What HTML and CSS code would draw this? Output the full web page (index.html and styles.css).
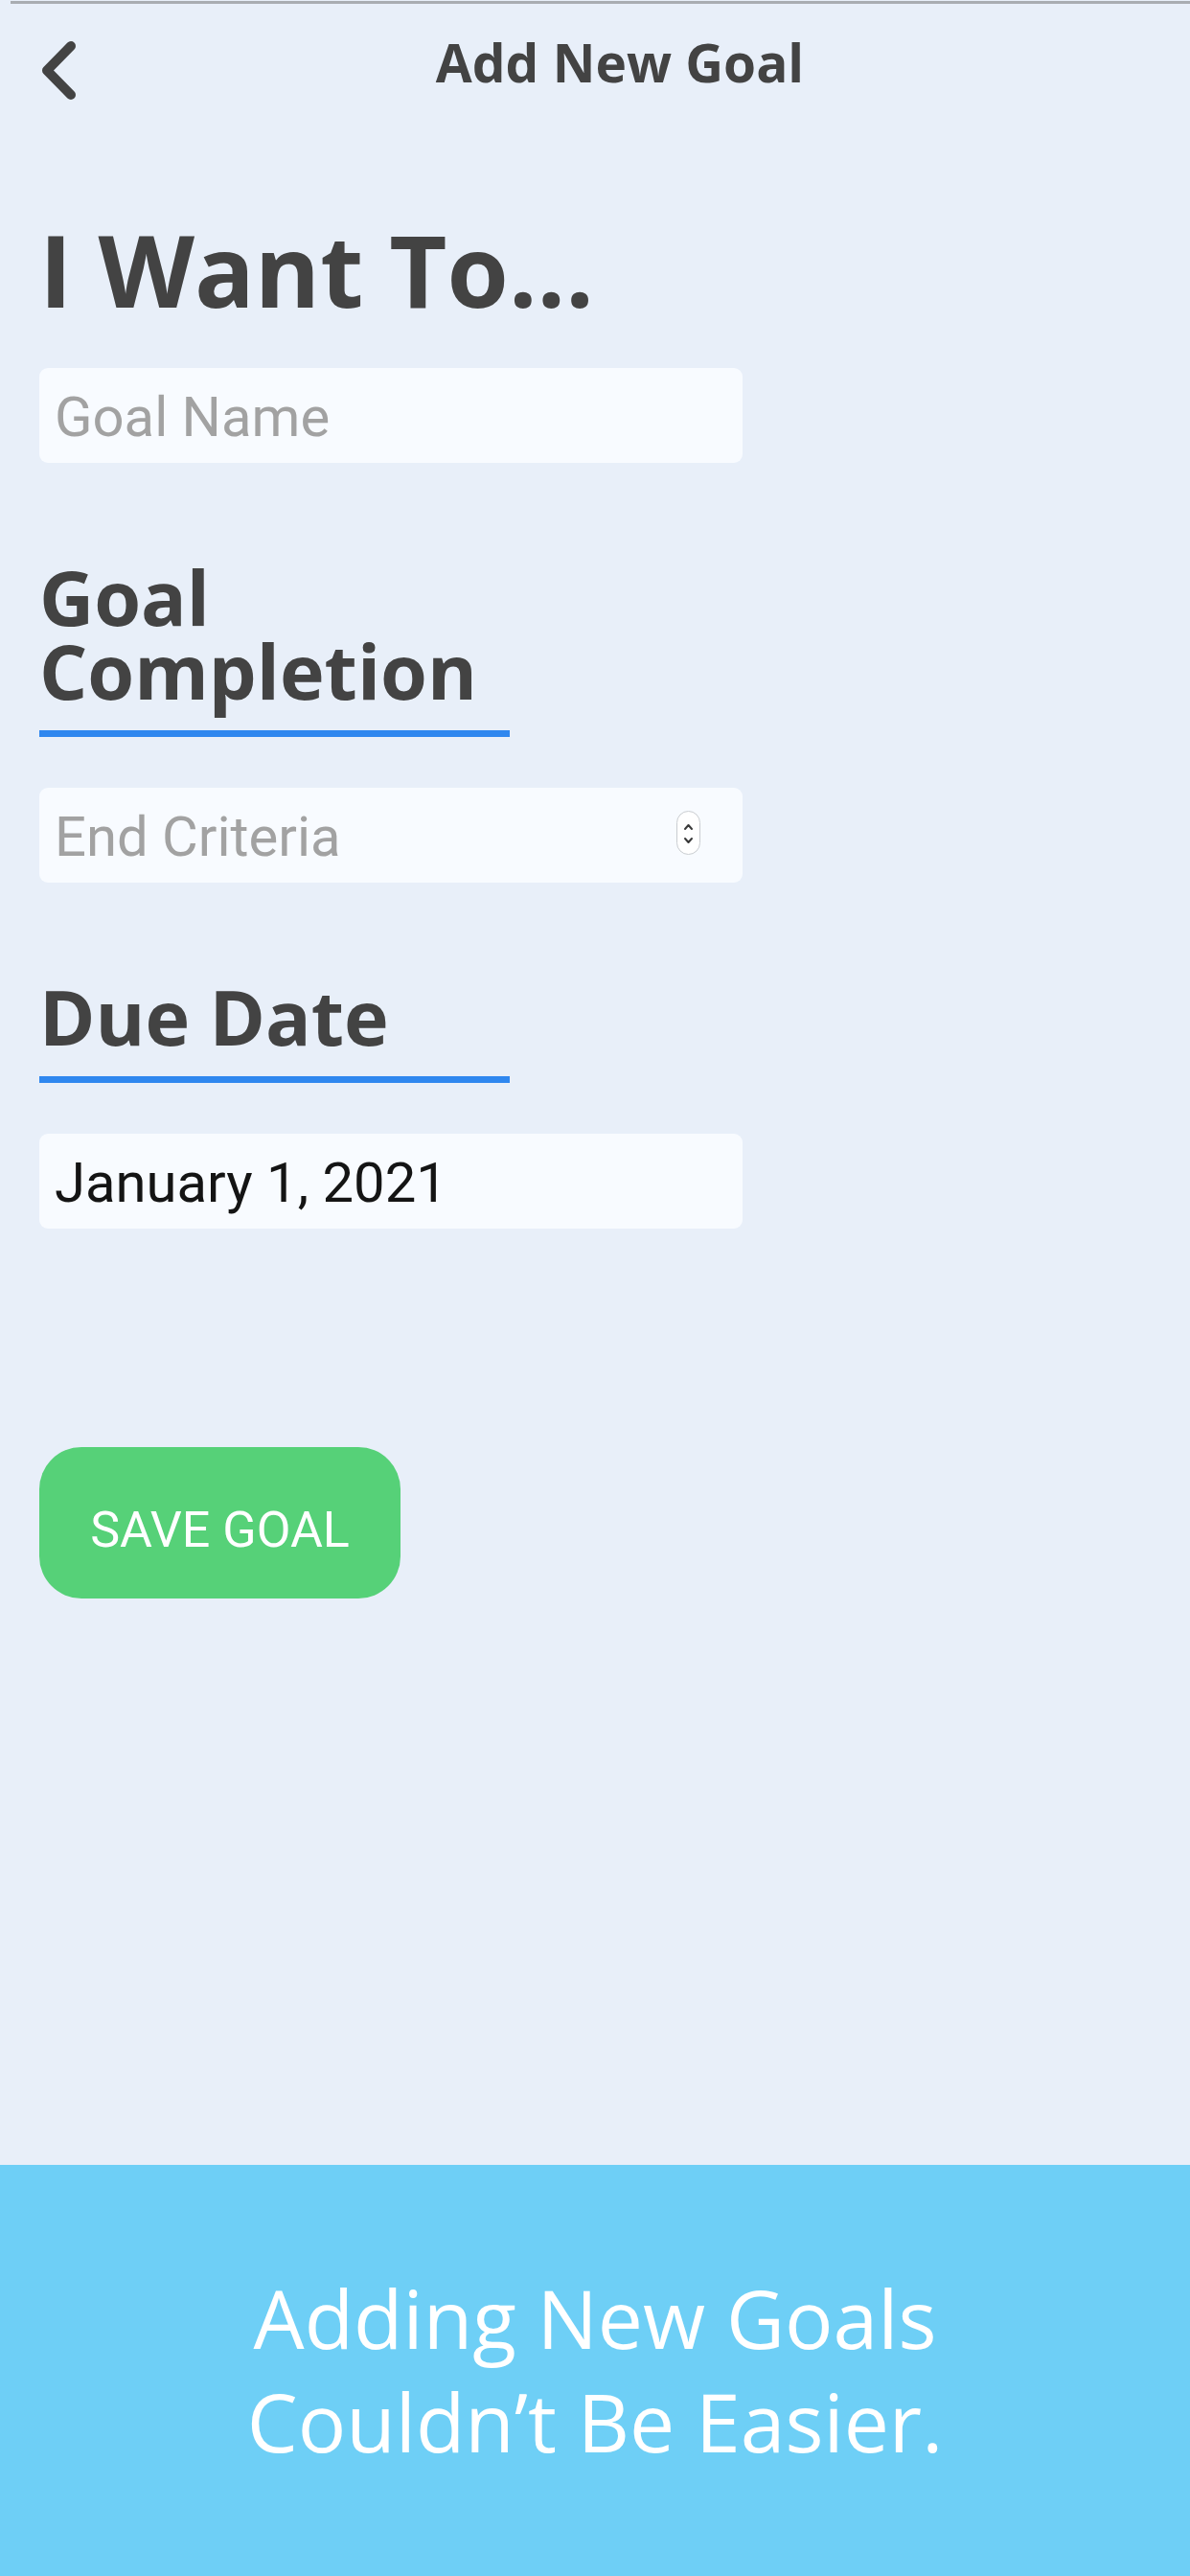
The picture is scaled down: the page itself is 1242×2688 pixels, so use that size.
FILE: index.html
```html
<!DOCTYPE html>
<html lang="en">
<head>
<meta charset="utf-8">
<title>Add New Goal</title>
<link rel="stylesheet" href="styles.css">
</head>
<body>
<div class="page">
  <main class="main">
    <div class="topline"></div>
    <header class="navbar">
      <svg class="back" viewBox="0 0 40 63" width="40" height="63" aria-label="Back">
        <polyline points="34,6 9,31.5 34,57" fill="none" stroke="#434343" stroke-width="10" stroke-linecap="round" stroke-linejoin="round"/>
      </svg>
      <div class="nav-title">Add New Goal</div>
    </header>
    <section class="form">
      <h1 class="want">I Want To...</h1>
      <div class="field placeholder">Goal Name</div>
      <h2 class="section-title">Goal Completion</h2>
      <div class="field placeholder select">
        <span>End Criteria</span>
        <svg class="spinner" viewBox="0 0 25 46" width="25" height="46">
          <rect x="0.5" y="0.5" width="24" height="45" rx="12" fill="#ffffff" stroke="#c9ccd0" stroke-width="1"/>
          <polyline points="9,19 12.5,15 16,19" fill="none" stroke="#3a3a3a" stroke-width="2" stroke-linecap="round" stroke-linejoin="round"/>
          <polyline points="9,29 12.5,33 16,29" fill="none" stroke="#3a3a3a" stroke-width="2" stroke-linecap="round" stroke-linejoin="round"/>
        </svg>
      </div>
      <h2 class="section-title">Due Date</h2>
      <div class="field value">January 1, 2021</div>
      <button class="save" type="button">SAVE GOAL</button>
    </section>
  </main>
  <footer class="banner">
    <p class="banner-text">Adding New Goals<br>Couldn’t Be Easier.</p>
  </footer>
</div>
</body>
</html>
```
FILE: styles.css
```css
* { box-sizing: border-box; }
html, body { margin: 0; padding: 0; }
body {
  background: #e8eff9;
  font-family: "Open Sans", "Liberation Sans", sans-serif;
}
.page {
  min-height: 2688px;
  display: flex;
  flex-direction: column;
}
.main {
  flex: 1;
}
.topline {
  height: 3px;
  margin: 1px 0 0 11px;
  background: #a9adb2;
}
.navbar {
  height: 136px;
  display: flex;
  align-items: flex-start;
  padding-left: 40px;
}
.back {
  display: block;
  margin-top: 38px;
  flex: none;
}
.nav-title {
  flex: 1;
  margin-top: 21px;
  margin-right: 28px;
  text-align: center;
  font-size: 55px;
  line-height: 80px;
  font-weight: 700;
  color: #434343;
}
.form {
  padding-left: 41px;
  display: flex;
  flex-direction: column;
  align-items: flex-start;
}
.want {
  margin: 81px 0 0;
  font-size: 104px;
  line-height: 120px;
  font-weight: 700;
  color: #434343;
}
.field {
  width: 734px;
  height: 99px;
  margin-top: 43px;
  padding: 4px 0 0 16px;
  line-height: 95px;
  border-radius: 9px;
  background: #f8fbff;
  font-family: Roboto, "Liberation Sans", sans-serif;
  font-size: 58px;
  white-space: nowrap;
}
.placeholder { color: #a2a2a2; }
.value {
  color: #141414;
  margin-top: 53px;
}
.select {
  display: flex;
  justify-content: space-between;
  align-items: flex-start;
  margin-top: 53px;
  padding-right: 44px;
}
.spinner {
  display: block;
  margin-top: 20px;
}
.section-title {
  width: 491px;
  margin: 101px 0 0;
  padding-bottom: 24px;
  border-bottom: 7px solid #2f87ef;
  font-size: 79px;
  line-height: 77px;
  font-weight: 700;
  color: #434343;
}
.save {
  margin-top: 228px;
  width: 377px;
  height: 158px;
  padding: 16px 0 0;
  border: none;
  border-radius: 44px;
  background: #56d178;
  color: #ffffff;
  font-family: Roboto, "Liberation Sans", sans-serif;
  font-size: 52px;
  line-height: 142px;
  font-weight: 400;
}
.banner {
  height: 429px;
  background: #6ecff6;
  padding-top: 106px;
}
.banner-text {
  margin: 0;
  text-align: center;
  color: #ffffff;
  font-size: 84px;
  line-height: 108px;
  font-weight: 400;
}
```
